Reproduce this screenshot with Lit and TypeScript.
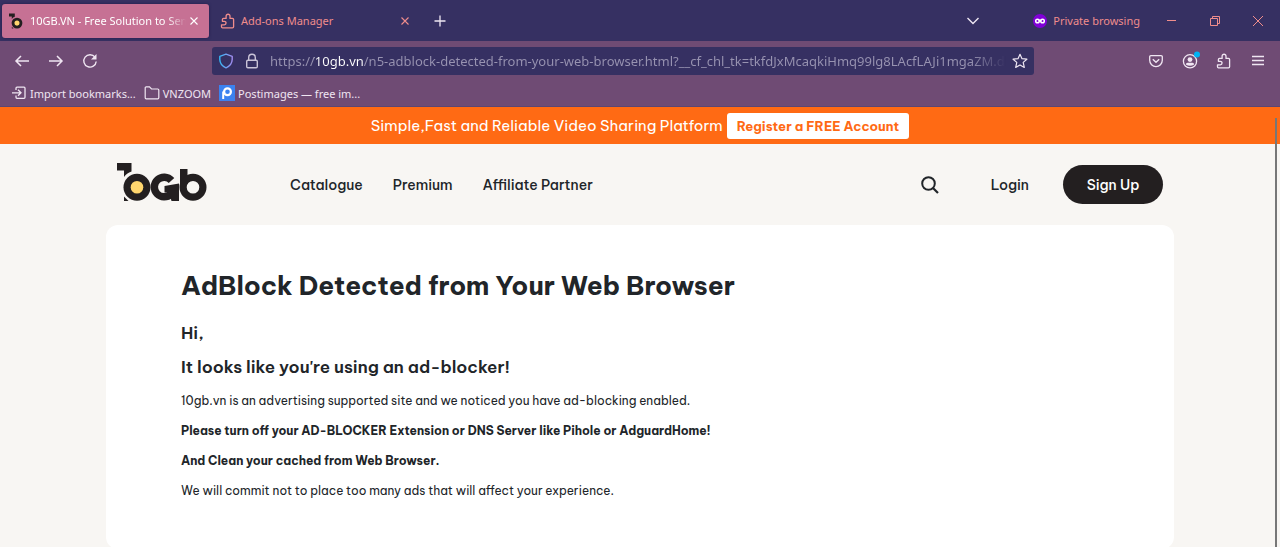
import { LitElement, html, css, svg } from "lit";
import { customElement } from "lit/decorators.js";

const puzzle = svg`<path d="M2.500 14.800h10a1.100 1.100 0 0 0 1.100-1.100V6.500a1.100 1.100 0 0 0-1.100-1.100H10V3.200a1.950 1.950 0 0 0-3.900 0v2.200H3.500a1.100 1.100 0 0 0-1.100 1.100v1.800h1.900a1.750 1.750 0 0 1 0 3.500H1.500v2a1 1 0 0 0 1 1z" fill="none" stroke="currentColor" stroke-width="1.300" stroke-linejoin="round"/>`;
const cross = svg`<path d="M4.500 4.500l7 7M11.500 4.500l-7 7" fill="none" stroke="currentColor" stroke-width="1.100"/>`;
const monogram = svg`
  <path d="M0 0H14.500V8.500Q9.500 10 7 14V7.500H0z" fill="#231f20"/>
  <path d="M7 33.500l4.500 4.500H7z" fill="#231f20"/>
  <circle cx="20" cy="24.300" r="13.500" fill="#231f20"/>
  <circle cx="20" cy="24.300" r="6.300" fill="#ffd66e"/>`;

@customElement("browser-chrome")
export class BrowserChrome extends LitElement {
  static styles = css`
    :host { display: block; font-family: "Noto Sans", "Open Sans", sans-serif; }
    * { box-sizing: border-box; }
    button { border: 0; padding: 0; background: none; color: inherit; font: inherit; display: flex; align-items: center; }
    svg { display: block; flex: none; }
    .tabs { height: 41px; background: #363062; display: flex; align-items: center; padding: 0 14px 0 2px; color: #f08d8c; font-size: 11px; }
    .tab { display: flex; align-items: center; width: 207px; height: 34px; padding: 0 7px; border-radius: 3px; }
    .tab.second { margin-left: 4px; }
    .tab.on { background: #c67194; color: #fff; box-shadow: 0 0 3px #211b4a; }
    .name { flex: 1; min-width: 0; white-space: nowrap; text-align: left; margin-left: 5px; }
    .on .name { -webkit-mask-image: linear-gradient(90deg, #000 88%, transparent); mask-image: linear-gradient(90deg, #000 88%, transparent); overflow: hidden; }
    .plus { color: #eee6f2; margin-left: 12px; }
    .list { color: #eee6f2; margin-left: auto; margin-right: 52px; }
    .private { display: flex; align-items: center; gap: 6px; margin-right: 24px; }
    .win { display: flex; gap: 27px; }
    .bar { background: #6f4b74; color: #f0e6f2; border-bottom: 1px solid #5b4675; }
    .nav { height: 40px; display: flex; align-items: center; padding: 0 14px; }
    .group { display: flex; gap: 18px; }
    .url { margin-left: 114px; flex: 1; max-width: 822px; height: 28px; background: #363062; border-radius: 3px; display: flex; align-items: center; padding: 0 6px; gap: 10px; color: #cac4d8; }
    .url input { flex: 1; min-width: 0; border: 0; outline: 0; padding: 0; height: 24px; font: 13px "Noto Sans", "Open Sans", sans-serif; color: transparent;
      background: linear-gradient(90deg, #9893b1 44px, #fff 44px 93px, #9893b1 93px calc(100% - 36px), transparent) text; -webkit-background-clip: text; background-clip: text; }
    .url .star { margin-left: -4px; }
    .tools { display: flex; gap: 18px; margin-left: auto; }
    .marks { height: 25px; display: flex; align-items: flex-start; gap: 8px; padding: 2px 12px; font-size: 11px; }
    .marks a { display: flex; align-items: center; gap: 3px; height: 20px; color: inherit; text-decoration: none; white-space: nowrap; }
  `;
  render() {
    return html`
      <div class="tabs" role="tablist">
        <div class="tab on" role="tab" aria-selected="true">
          <svg width="16" height="16" viewBox="0 -1 40 40">${monogram}</svg>
          <span class="name">10GB.VN - Free Solution to Send</span>
          <button aria-label="Close tab"><svg width="16" height="16">${cross}</svg></button>
        </div>
        <div class="tab second" role="tab" aria-selected="false">
          <svg width="16" height="16">${puzzle}</svg>
          <span class="name">Add-ons Manager</span>
          <button aria-label="Close tab"><svg width="16" height="16">${cross}</svg></button>
        </div>
        <button class="plus" aria-label="New tab"><svg width="16" height="16"><path d="M8 2.500v11M2.500 8h11" stroke="currentColor" stroke-width="1.300"/></svg></button>
        <button class="list" aria-label="List all tabs"><svg width="16" height="16"><path d="M2.500 5L8 10.500 13.500 5" fill="none" stroke="currentColor" stroke-width="1.400"/></svg></button>
        <span class="private">
          <svg width="14" height="14" viewBox="0 0 14 14"><circle cx="7" cy="7" r="7" fill="#8000d7"/><circle cx="4.500" cy="7" r="1.800" fill="none" stroke="#fff" stroke-width="1.500"/><circle cx="9.500" cy="7" r="1.800" fill="none" stroke="#fff" stroke-width="1.500"/><path d="M5.500 5.600h3v1.600h-3z" fill="#fff"/></svg>
          Private browsing</span>
        <div class="win">
          <button aria-label="Minimize"><svg width="16" height="16"><path d="M3 7.500h9" stroke="currentColor"/></svg></button>
          <button aria-label="Restore"><svg width="16" height="16"><path d="M3.500 5.500h7v7h-7zM5.500 5.500v-2h7v7h-2" fill="none" stroke="currentColor"/></svg></button>
          <button aria-label="Close"><svg width="16" height="16"><path d="M3 3l10 10M13 3l-10 10" stroke="currentColor"/></svg></button>
        </div>
      </div>
      <div class="bar">
        <div class="nav">
          <div class="group">
            <button aria-label="Back"><svg width="16" height="16"><path d="M15 8H2.500M7 3L2 8l5 5" fill="none" stroke="currentColor" stroke-width="1.500"/></svg></button>
            <button aria-label="Forward"><svg width="16" height="16"><path d="M1 8h12.500M9 3l5 5-5 5" fill="none" stroke="currentColor" stroke-width="1.500"/></svg></button>
            <button aria-label="Reload"><svg width="16" height="16"><path d="M13 4.200A6.200 6.200 0 1 0 14.200 8.500" fill="none" stroke="currentColor" stroke-width="1.400"/><path d="M14.500 1v5.500H9z" fill="currentColor"/></svg></button>
          </div>
          <div class="url">
            <svg width="16" height="16"><defs><linearGradient id="sh"><stop stop-color="#35b7f5"/><stop offset="1" stop-color="#a18cf0"/></linearGradient></defs><path d="M8 1.200L14.200 3.400V6.500Q14 12.300 8 14.800Q2 12.300 1.800 6.500V3.400z" fill="none" stroke="url(#sh)" stroke-width="1.400" stroke-linejoin="round"/></svg>
            <svg width="16" height="16"><rect x="2.700" y="7.200" width="10.600" height="7.600" rx="1.200" fill="none" stroke="currentColor" stroke-width="1.400"/><path d="M4.700 7V4.500a3.300 3.300 0 0 1 6.600 0V7" fill="none" stroke="currentColor" stroke-width="1.400"/></svg>
            <input aria-label="Address" value="https://10gb.vn/n5-adblock-detected-from-your-web-browser.html?__cf_chl_tk=tkfdJxMcaqkiHmq99lg8LAcfLAJi1mgaZM.dklaAs" />
            <button class="star" aria-label="Bookmark this page"><svg width="16" height="16"><path d="M8 1.300l2 4.400 4.900.5-3.700 3.200 1.100 5L8 11.900l-4.300 2.500 1.100-5L1.100 6.200 6 5.700z" fill="none" stroke="#eee6f2" stroke-width="1.200" stroke-linejoin="round"/></svg></button>
          </div>
          <div class="tools">
            <button aria-label="Save to Pocket"><svg width="16" height="16"><path d="M2.900 2.700h10.200a1.200 1.200 0 0 1 1.200 1.200v3.400a6.300 6.300 0 0 1-12.600 0V3.900a1.200 1.200 0 0 1 1.200-1.200z" fill="none" stroke="currentColor" stroke-width="1.300"/><path d="M4.800 6.200L8 9.200l3.200-3" fill="none" stroke="currentColor" stroke-width="1.400"/></svg></button>
            <button aria-label="Account"><svg width="16" height="16" overflow="visible"><circle cx="8" cy="8.300" r="6.600" fill="none" stroke="currentColor" stroke-width="1.300"/><circle cx="8" cy="6.600" r="2.400" fill="currentColor"/><path d="M3.800 11.500Q4 9.800 5.500 9.800h5q1.500 0 1.700 1.700Q8 14.200 3.800 11.500z" fill="currentColor"/><circle cx="15" cy="1.500" r="3" fill="#00b3f4"/></svg></button>
            <button aria-label="Extensions"><svg width="16" height="16">${puzzle}</svg></button>
            <button aria-label="Menu"><svg width="16" height="16"><path d="M2 3.500h12M2 7.500h12M2 11.500h12" stroke="currentColor" stroke-width="1.300"/></svg></button>
          </div>
        </div>
        <div class="marks">
          <a href="#import"><svg width="15" height="16"><path d="M4 5V3.200a1 1 0 0 1 1-1h7a1 1 0 0 1 1 1v9.100a1 1 0 0 1-1 1H5a1 1 0 0 1-1-1V10.500M0 7.800h8.500M6 4.800l3 3-3 3" fill="none" stroke="currentColor" stroke-width="1.300"/></svg>Import bookmarks...</a>
          <a href="#vnzoom"><svg width="16" height="16"><path d="M1.200 12.800v-10a1 1 0 0 1 1-1h3.300l2 2.200h6.300a1 1 0 0 1 1 1v7.800a1 1 0 0 1-1 1H2.200a1 1 0 0 1-1-1z" fill="none" stroke="currentColor" stroke-width="1.200"/></svg>VNZOOM</a>
          <a href="#postimages"><svg width="16" height="16"><path d="M0 0h16v16H0z" fill="#3b82f0"/><circle cx="8.500" cy="6.800" r="3.400" fill="none" stroke="#fff" stroke-width="2.200"/><path d="M4.200 6.500V14" stroke="#fff" stroke-width="2"/></svg>Postimages — free im...</a>
        </div>
      </div>`;
  }
}

@customElement("app-root")
export class AppRoot extends LitElement {
  static styles = css`
    :host { display: flex; flex-direction: column; height: 100vh; overflow: hidden; font-family: "Be Vietnam Pro", Inter, sans-serif; color: #212529; background: #f8f6f3; }
    * { box-sizing: border-box; }
    browser-chrome { flex: none; }
    button { border: 0; padding: 0; background: none; font: inherit; color: inherit; cursor: pointer; }
    a { color: inherit; text-decoration: none; }
    .page { flex: 1; min-height: 0; position: relative; overflow: hidden; }
    .thumb { position: absolute; right: 3px; top: 11px; bottom: 0; width: 2px; background: #777; }
    .promo { height: 37px; background: #ff6a14; color: #fff; display: flex; justify-content: center; align-items: center; gap: 4px; font-size: 15px; font-weight: 400; }
    .promo a { background: #fff; color: #ff6a14; border-radius: 3px; height: 26px; padding: 0 10px; line-height: 26px; font-size: 13px; font-weight: 700; }
    header { max-width: 1068px; height: 81px; margin: 0 auto; padding: 0 11px; display: flex; align-items: center; font-size: 14px; font-weight: 500; }
    .logo { display: block; margin-right: 83px; }
    svg { display: block; }
    nav { display: flex; gap: 30px; }
    .search { margin-left: auto; }
    .login { margin: 0 34px 0 52px; }
    .signup { background: #231f20; color: #fff; height: 39px; width: 100px; border-radius: 20px; }
    main { max-width: 1068px; margin: 0 auto; background: #fff; border-radius: 12px; padding: 42px 75px 38px; }
    h1 { margin: 0 0 16px; font-size: 26px; line-height: 38px; font-weight: 700; }
    h2 { margin: 0 0 10px; font-size: 17px; line-height: 24px; font-weight: 600; }
    p { margin: 0 0 10px; font-size: 12px; line-height: 20px; }
    h2 + p { margin-top: 12px; }
    strong { font-weight: 700; }
  `;
  render() {
    return html`
      <browser-chrome></browser-chrome>
      <div class="page">
        <div class="promo"><span>Simple,Fast and Reliable Video Sharing Platform</span><a href="#register">Register a FREE Account</a></div>
        <header>
          <a class="logo" href="#home" aria-label="10gb home"><svg width="90" height="43" viewBox="0 0 90 43">${monogram}
            <path d="M54.500 17.500A9.800 9.800 0 1 0 54 31" fill="none" stroke="#231f20" stroke-width="7.400"/>
            <path d="M47.500 23L62 20.500V38H54.500L52 29.500H47.500z" fill="#231f20"/>
            <path d="M63 6h7.500v15L63 24z" fill="#231f20"/>
            <circle cx="76" cy="24.300" r="9.900" fill="none" stroke="#231f20" stroke-width="7.200"/></svg></a>
          <nav><a href="#catalogue">Catalogue</a><a href="#premium">Premium</a><a href="#affiliate">Affiliate Partner</a></nav>
          <button class="search" aria-label="Search"><svg width="18" height="18"><circle cx="7.500" cy="7.500" r="6.300" fill="none" stroke="currentColor" stroke-width="2"/><path d="M12 12l5 5" stroke="currentColor" stroke-width="2.200"/></svg></button>
          <a class="login" href="#login">Login</a>
          <button class="signup">Sign Up</button>
        </header>
        <main>
          <h1>AdBlock Detected from Your Web Browser</h1>
          <h2>Hi,</h2>
          <h2>It looks like you're using an ad-blocker!</h2>
          <p>10gb.vn is an advertising supported site and we noticed you have ad-blocking enabled.</p>
          <p><strong>Please turn off your AD-BLOCKER Extension or DNS Server like Pihole or AdguardHome!</strong></p>
          <p><strong>And Clean your cached from Web Browser.</strong></p>
          <p>We will commit not to place too many ads that will affect your experience.</p>
        </main>
        <div class="thumb"></div>
      </div>`;
  }
}
